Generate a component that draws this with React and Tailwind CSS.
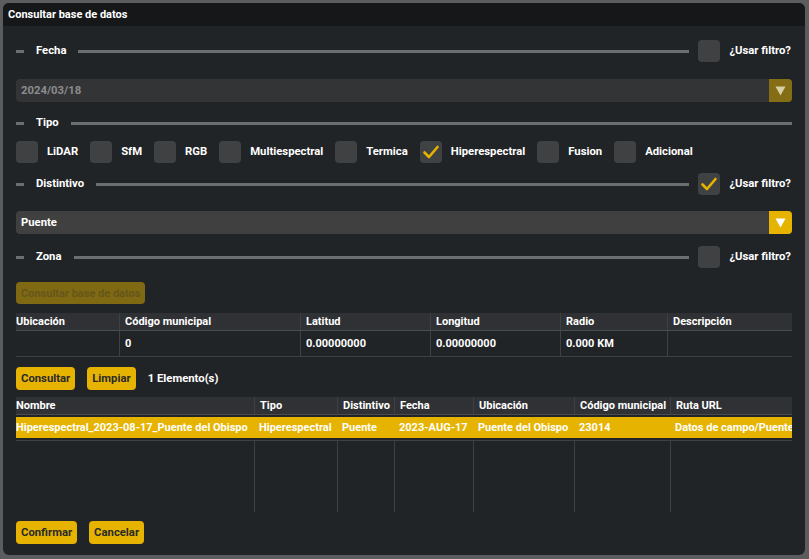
import React from "react";

function Check() {
  return (
    <svg width="22" height="22" viewBox="0 0 22 22">
      <path d="M4.5 11.5 L9 16 L17.5 6" fill="none" stroke="#e6b400" strokeWidth="2.6" strokeLinecap="round" strokeLinejoin="round" />
    </svg>
  );
}

function Box({ checked }) {
  return (
    <div className="w-[22px] h-[22px] rounded-[4px] bg-[#404142] flex items-center justify-center shrink-0">
      {checked ? <Check /> : null}
    </div>
  );
}

function Section({ label, filter, checked }) {
  return (
    <div className="flex items-center h-[22px]">
      <div className="w-[8px] h-[3px] bg-[#6d6e70] shrink-0" />
      <div className="ml-[12px] text-white">{label}</div>
      <div className="ml-[12px] flex-1 h-[3px] bg-[#6d6e70]" />
      {filter ? (
        <>
          <div className="ml-[9px]"><Box checked={checked} /></div>
          <div className="ml-[9px] text-white mr-[1px]">¿Usar filtro?</div>
        </>
      ) : null}
    </div>
  );
}

function Triangle({ color }) {
  return (
    <svg width="11" height="10" viewBox="0 0 11 10">
      <path d="M0.5 0.5 L10.5 0.5 L5.5 9.5 Z" fill={color} />
    </svg>
  );
}

export default function App() {
  const tipos = [
    ["LiDAR", false],
    ["SfM", false],
    ["RGB", false],
    ["Multiespectral", false],
    ["Termica", false],
    ["Hiperespectral", true],
    ["Fusion", false],
    ["Adicional", false],
  ];
  const t1 = [
    ["Ubicación", "", 103],
    ["Código municipal", "0", 181],
    ["Latitud", "0.00000000", 130],
    ["Longitud", "0.00000000", 130],
    ["Radio", "0.000 KM", 107],
    ["Descripción", "", 125],
  ];
  const t2 = [
    ["Nombre", "Hiperespectral_2023-08-17_Puente del Obispo", 238],
    ["Tipo", "Hiperespectral", 83],
    ["Distintivo", "Puente", 57],
    ["Fecha", "2023-AUG-17", 79],
    ["Ubicación", "Puente del Obispo", 101],
    ["Código municipal", "23014", 96],
    ["Ruta URL", "Datos de campo/Puente del Obispo/Hiperespectral", 122],
  ];
  return (
    <div
      className="w-[809px] h-[559px] bg-[#5b5c5d] pt-[3px] pl-[3px] pr-[4px] pb-[4px] text-[11.3px] font-bold leading-none"
      style={{ fontFamily: "Roboto, 'Liberation Sans', sans-serif" }}
    >
      <div className="w-full h-full rounded-[6px] bg-[#212427] overflow-hidden flex flex-col">
        <div className="h-[23px] bg-[#161719] px-[5px] flex items-center text-white text-[11px]">
          Consultar base de datos
        </div>
        <div className="px-[13px] flex flex-col">
          <div className="mt-[14px]">
            <Section label="Fecha" filter checked={false} />
          </div>
          <div className="mt-[17px] h-[23px] rounded-[4px] bg-[#333436] flex items-center">
            <div className="flex-1 pl-[5px] text-[#8b8c8d]">2024/03/18</div>
            <div className="w-[23px] h-[23px] rounded-r-[4px] bg-[#846d14] flex items-center justify-center">
              <Triangle color="#d7cfa6" />
            </div>
          </div>
          <div className="mt-[10px]">
            <Section label="Tipo" />
          </div>
          <div className="mt-[7px] flex items-center h-[22px]">
            {tipos.map(([l, c]) => (
              <div key={l} className="flex items-center mr-[12px]">
                <Box checked={c} />
                <div className="ml-[9px] text-white">{l}</div>
              </div>
            ))}
          </div>
          <div className="mt-[10px]">
            <Section label="Distintivo" filter checked />
          </div>
          <div className="mt-[16px] h-[23px] rounded-[4px] bg-[#404040] flex items-center">
            <div className="flex-1 pl-[5px] text-white">Puente</div>
            <div className="w-[23px] h-[23px] rounded-r-[4px] bg-[#e6b400] flex items-center justify-center">
              <Triangle color="#ffffff" />
            </div>
          </div>
          <div className="mt-[12px]">
            <Section label="Zona" filter checked={false} />
          </div>
          <div className="mt-[14px] flex">
            <div className="h-[22px] px-[5px] rounded-[4px] bg-[#7f6913] text-[#66561a] flex items-center text-[11px]">
              Consultar base de datos
            </div>
          </div>
          <div className="mt-[9px] flex flex-col text-[11px]">
            <div className="flex h-[18px] bg-[#2f3134] border-b border-[#4a4c4f]">
              {t1.map(([h, , w], i) => (
                <div
                  key={h}
                  className={`flex items-center text-white ${i === 0 ? "pl-0" : "pl-[5px] border-l border-[#3e4044]"} ${i === t1.length - 1 ? "flex-1" : ""}`}
                  style={i === t1.length - 1 ? {} : { width: w }}
                >
                  {h}
                </div>
              ))}
            </div>
            <div className="flex h-[26px] border-b border-[#3e4044]">
              {t1.map(([h, v, w], i) => (
                <div
                  key={h}
                  className={`flex items-center text-white ${i === 0 ? "pl-0" : "pl-[5px] border-l border-[#3e4044]"} ${i === t1.length - 1 ? "flex-1" : ""}`}
                  style={i === t1.length - 1 ? {} : { width: w }}
                >
                  {v}
                </div>
              ))}
            </div>
          </div>
          <div className="mt-[10px] flex items-center">
            <div className="h-[23px] px-[5px] rounded-[4px] bg-[#e6b400] text-[#2a2a2a] flex items-center">Consultar</div>
            <div className="ml-[12px] h-[23px] px-[5px] rounded-[4px] bg-[#e6b400] text-[#2a2a2a] flex items-center">Limpiar</div>
            <div className="ml-[12px] text-white">1 Elemento(s)</div>
          </div>
          <div className="mt-[7px] flex flex-col overflow-hidden text-[11px]">
            <div className="flex h-[18px] bg-[#2f3134] border-b border-[#4a4c4f]">
              {t2.map(([h, , w], i) => (
                <div
                  key={h}
                  className={`flex items-center text-white shrink-0 ${i === 0 ? "pl-0" : "pl-[5px] border-l border-[#3e4044]"}`}
                  style={{ width: w }}
                >
                  {h}
                </div>
              ))}
            </div>
            <div className="flex h-[26px] border-b border-[#3e4044] pt-[2px] pb-[3px]">
              <div className="flex w-full h-[21px] bg-[#e6b400]">
                {t2.map(([h, v, w], i) => (
                  <div
                    key={h}
                    className={`flex items-center text-white shrink-0 whitespace-nowrap overflow-hidden ${i === 0 ? "pl-0" : "pl-[5px]"}`}
                    style={{ width: w }}
                  >
                    {v}
                  </div>
                ))}
              </div>
            </div>
            <div className="flex h-[71px]">
              {t2.map(([h, , w], i) => (
                <div
                  key={h}
                  className={`shrink-0 ${i === 0 ? "" : "border-l border-[#3e4044]"}`}
                  style={{ width: w }}
                />
              ))}
            </div>
          </div>
          <div className="mt-[9px] flex items-center">
            <div className="h-[23px] px-[5px] rounded-[4px] bg-[#e6b400] text-[#2a2a2a] flex items-center">Confirmar</div>
            <div className="ml-[12px] h-[23px] px-[5px] rounded-[4px] bg-[#e6b400] text-[#2a2a2a] flex items-center">Cancelar</div>
          </div>
        </div>
      </div>
    </div>
  );
}
